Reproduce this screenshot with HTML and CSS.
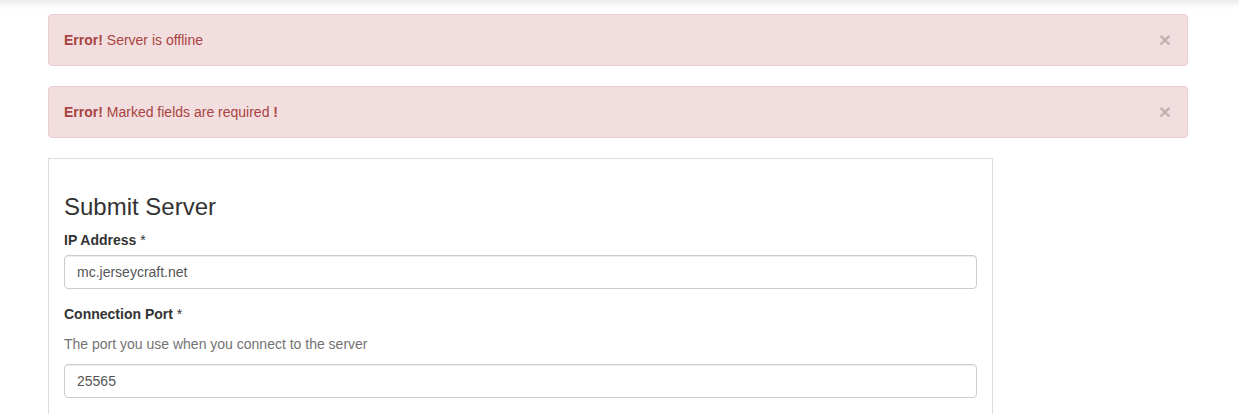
FILE: index.html
```html
<!DOCTYPE html>
<html>
<head>
<meta charset="utf-8">
<link rel="stylesheet" href="styles.css">
</head>
<body>
<div class="topshade"></div>
<div class="container">
  <div class="alert">
    <button class="close" type="button">&times;</button>
    <strong>Error!</strong> Server is offline
  </div>
  <div class="alert">
    <button class="close" type="button">&times;</button>
    <strong>Error!</strong> Marked fields are required <strong>!</strong>
  </div>
  <div class="panel">
    <h3 class="title">Submit Server</h3>
    <div class="form-group">
      <label class="label">IP Address <span class="req">*</span></label>
      <input class="input" type="text" value="mc.jerseycraft.net">
    </div>
    <div class="form-group">
      <label class="label">Connection Port <span class="req">*</span></label>
      <p class="help">The port you use when you connect to the server</p>
      <input class="input" type="text" value="25565">
    </div>
  </div>
</div>
</body>
</html>
```

FILE: styles.css
```css
* { box-sizing: border-box; }
html, body { margin: 0; padding: 0; }
body {
  font-family: "Liberation Sans", Arial, sans-serif;
  font-size: 14px;
  line-height: 20px;
  color: #333;
  background: #fff;
  overflow: hidden;
}
.topshade {
  height: 14px;
  background: linear-gradient(to bottom, #ebebeb 0px, #fafafa 6px, #fff 10px);
}
.container {
  width: 1140px;
  margin-left: 48px;
}
.alert {
  background: #f2dede;
  border: 1px solid #ebccd1;
  color: #a94442;
  border-radius: 4px;
  padding: 15px 35px 15px 15px;
  margin-bottom: 20px;
  height: 52px;
}
.alert strong { font-weight: bold; }
.close {
  float: right;
  position: relative;
  top: -1px;
  right: -19px;
  padding: 0;
  margin: 0;
  border: 0;
  background: transparent;
  font-family: "Liberation Sans", Arial, sans-serif;
  font-size: 21px;
  font-weight: bold;
  line-height: 1;
  color: #000;
  opacity: 0.2;
  cursor: pointer;
}
.panel {
  width: 945px;
  border: 1px solid #ddd;
  border-bottom: 0;
  padding: 15px 15px 40px;
}
.title {
  font-family: "Liberation Sans", Arial, sans-serif;
  font-size: 24px;
  font-weight: 500;
  line-height: 1.1;
  margin: 20px 0 10px;
  color: #333;
}
.form-group { margin-bottom: 15px; }
.label {
  display: block;
  font-weight: bold;
  margin-bottom: 5px;
}
.req { font-weight: normal; }
.help {
  margin: 10px 0 10px;
  color: #737373;
}
.input {
  display: block;
  width: 100%;
  height: 34px;
  padding: 6px 12px;
  font-family: "Liberation Sans", Arial, sans-serif;
  font-size: 14px;
  line-height: 20px;
  color: #555;
  background: #fff;
  border: 1px solid #ccc;
  border-radius: 4px;
  box-shadow: inset 0 1px 1px rgba(0,0,0,.075);
}
```
